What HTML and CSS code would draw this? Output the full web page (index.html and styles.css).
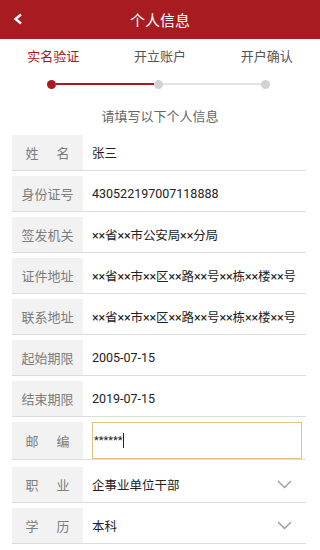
FILE: index.html
```html
<!DOCTYPE html>
<html lang="zh-CN">
<head>
    <meta charset="UTF-8">
    <meta name="viewport" content="width=device-width, initial-scale=1.0">
    <title>个人信息</title>
    <link rel="stylesheet" href="styles.css">
</head>
<body>

<header class="topbar">
    <span class="back">
        <svg width="10" height="12" viewBox="0 0 10 12"><polyline points="8,1.5 2.5,6 8,10.5" fill="none" stroke="#fff" stroke-width="2.4"/></svg>
    </span>
    <h1>个人信息</h1>
</header>

<!-- step bar -->
<div class="steps">
    <div class="step active">实名验证</div>
    <div class="step">开立账户</div>
    <div class="step">开户确认</div>
</div>
<div class="progress">
    <span class="dot done"></span>
    <span class="line done"></span>
    <span class="dot"></span>
    <span class="line"></span>
    <span class="dot"></span>
</div>

<p class="hint">请填写以下个人信息</p>

<div class="form">
    <div class="row">
        <div class="label"><span class="two">姓名</span></div>
        <div class="value">张三</div>
    </div>
    <div class="row">
        <div class="label">身份证号</div>
        <div class="value">430522197007118888</div>
    </div>
    <div class="row">
        <div class="label">签发机关</div>
        <div class="value addr">××省××市公安局××分局</div>
    </div>
    <div class="row">
        <div class="label">证件地址</div>
        <div class="value addr">××省××市××区××路××号××栋××楼××号</div>
    </div>
    <div class="row">
        <div class="label">联系地址</div>
        <div class="value addr">××省××市××区××路××号××栋××楼××号</div>
    </div>
    <div class="row">
        <div class="label">起始期限</div>
        <div class="value">2005-07-15</div>
    </div>
    <div class="row">
        <div class="label">结束期限</div>
        <div class="value">2019-07-15</div>
    </div>
    <div class="row row-input">
        <div class="label"><span class="two">邮编</span></div>
        <div class="value">
            <div class="field">******<span class="caret"></span></div>
        </div>
    </div>
    <div class="row">
        <div class="label"><span class="two">职业</span></div>
        <div class="value">企事业单位干部</div>
        <svg class="chevron" width="15" height="9" viewBox="0 0 15 9"><polyline points="1,1 7.5,7.5 14,1" fill="none" stroke="#9a9a9a" stroke-width="1.3"/></svg>
    </div>
    <div class="row">
        <div class="label"><span class="two">学历</span></div>
        <div class="value">本科</div>
        <svg class="chevron" width="15" height="9" viewBox="0 0 15 9"><polyline points="1,1 7.5,7.5 14,1" fill="none" stroke="#9a9a9a" stroke-width="1.3"/></svg>
    </div>
</div>

</body>
</html>
```

FILE: styles.css
```css
body {
    font-family: Roboto, "Noto Sans CJK SC", sans-serif;
    background: #ffffff;
    margin: 0;
    padding: 0;
    color: #222;
}
.topbar {
    height: 39px;
    background: #a71b21;
    display: flex;
    align-items: center;
    justify-content: center;
    position: relative;
}
.topbar h1 {
    margin: 0;
    font-size: 15px;
    font-weight: normal;
    color: #ffffff;
}
.back {
    position: absolute;
    left: 13px;
    top: 13px;
    display: flex;
}

/* steps */
.steps {
    display: flex;
    padding-top: 9px;
}
.step {
    flex: 1;
    text-align: center;
    font-size: 13px;
    line-height: 18px;
    color: #555;
}
.step.active {
    color: #a71b21;
}
.progress {
    display: flex;
    align-items: center;
    margin-top: 13px;
    padding: 0 50px 0 47px;
    height: 10px;
}
.dot {
    width: 9px;
    height: 9px;
    border-radius: 50%;
    background: #d2d2d2;
    flex-shrink: 0;
}
.dot.done {
    background: #a71b21;
}
.line {
    flex: 1;
    height: 2px;
    background: #e2e2e2;
}
.line.done {
    background: #a71b21;
}
.hint {
    margin: 19px 0 0;
    text-align: center;
    font-size: 13px;
    line-height: 18px;
    color: #666;
}

/* form rows */
.form {
    margin-top: 9px;
    padding: 0 14px 0 12px;
}
.row {
    display: flex;
    align-items: center;
    margin-top: 5px;
    border-bottom: 1px solid #dcdcdc;
}
.label {
    width: 71px;
    height: 35px;
    flex-shrink: 0;
    background: #f2f2f2;
    color: #7c7c7c;
    font-size: 13px;
    display: flex;
    align-items: center;
    justify-content: center;
}
.two {
    width: 44px;
    text-align: justify;
    text-align-last: justify;
}
.value {
    flex: 1;
    padding-left: 9px;
    font-size: 12.5px;
    white-space: nowrap;
}
.addr {
    letter-spacing: -0.12px;
}
.row-input {
    margin-bottom: 7px;
}
.row-input .label {
    height: 37px;
}
.row-input .value {
    padding-right: 4px;
}
.field {
    height: 35px;
    border: 1px solid #e2c57c;
    display: flex;
    align-items: center;
    padding-left: 1px;
    font-size: 11px;
}
.caret {
    width: 1px;
    height: 15px;
    background: #222;
    margin-left: 1px;
}
.chevron {
    margin-right: 14px;
}
```
